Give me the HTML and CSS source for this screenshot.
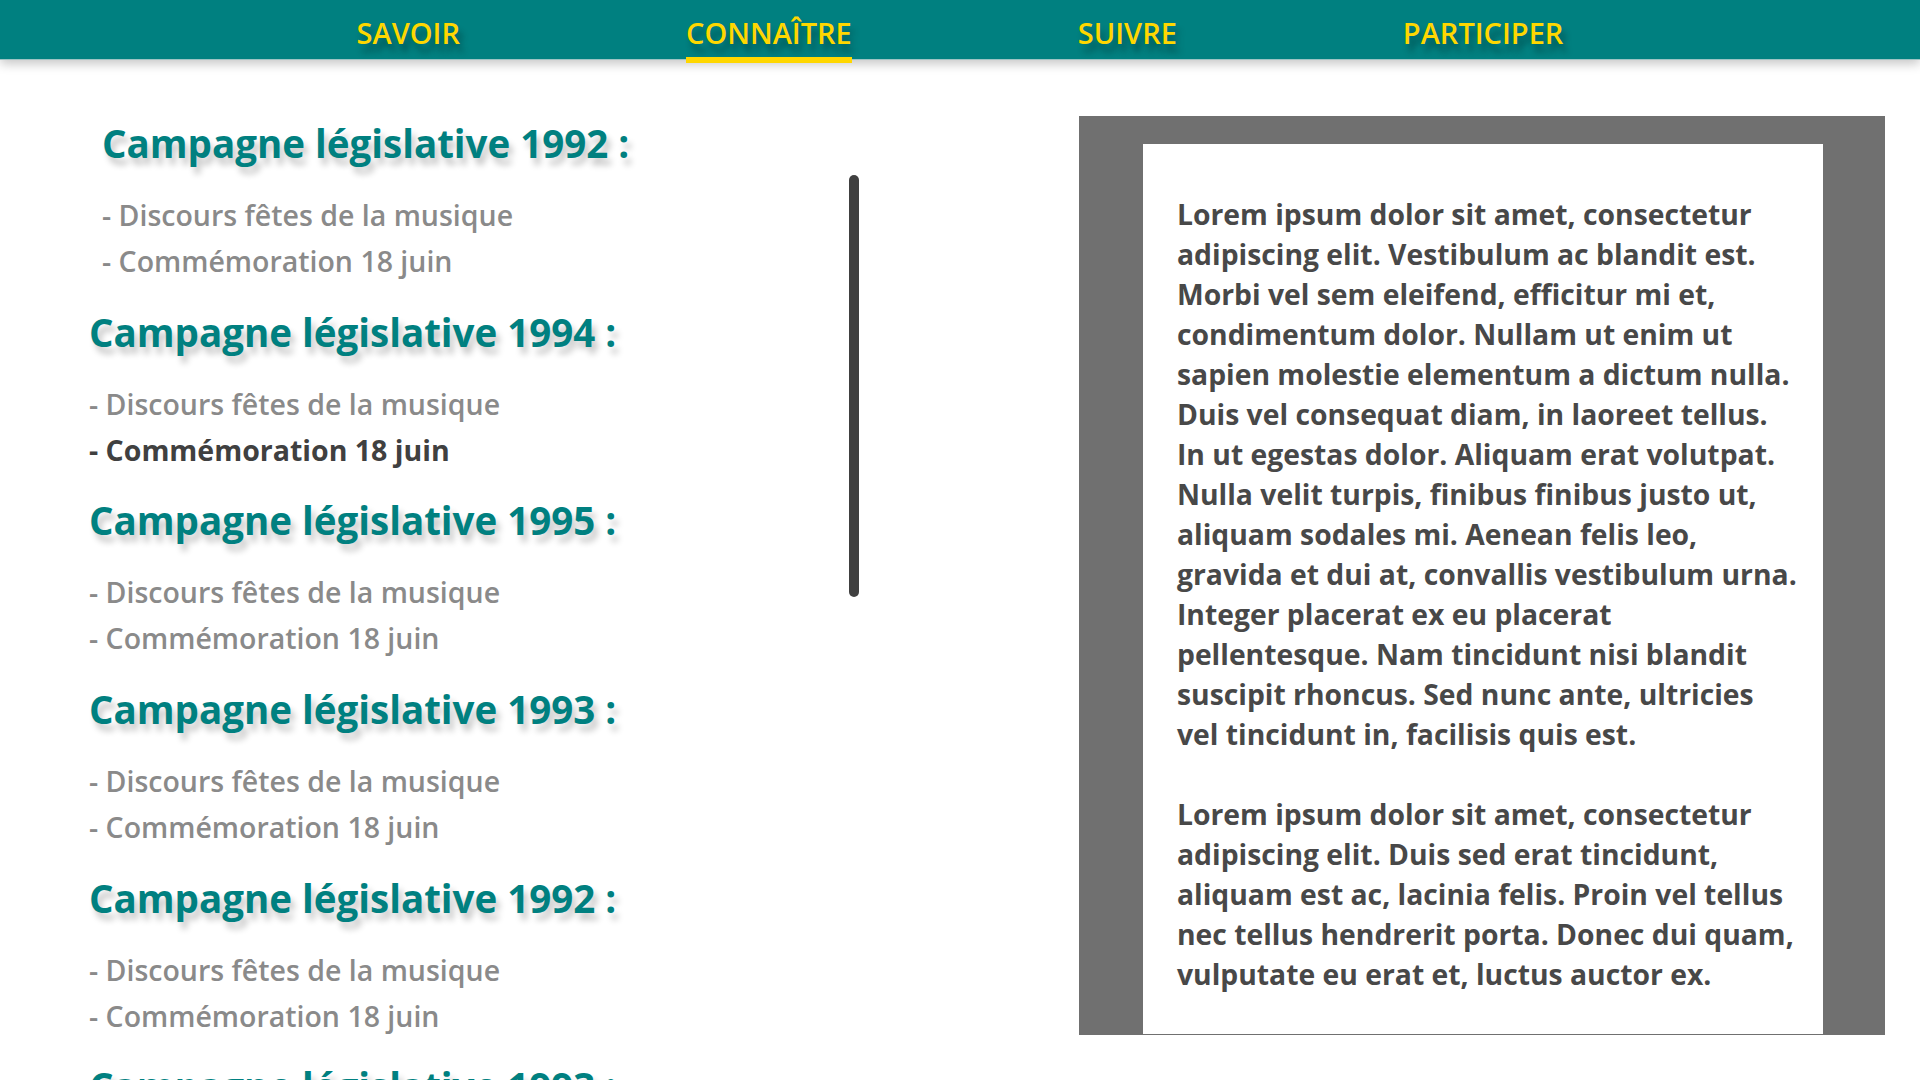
FILE: index.html
```html
<!DOCTYPE html>
<html lang="fr">
<head>
<meta charset="utf-8">
<title>Connaître</title>
<link rel="stylesheet" href="styles.css">
</head>
<body>
<header class="topbar">
  <nav class="nav">
    <a class="nav-link" href="#">SAVOIR</a>
    <a class="nav-link nav-link--active" href="#">CONNAÎTRE</a>
    <a class="nav-link" href="#">SUIVRE</a>
    <a class="nav-link" href="#">PARTICIPER</a>
  </nav>
</header>
<main class="layout">
  <section class="archive">
    <div class="archive-list">
      <div class="campaign campaign--offset">
        <h2 class="campaign-title">Campagne législative 1992 :</h2>
        <ul class="campaign-items">
          <li>- Discours fêtes de la musique</li>
          <li>- Commémoration 18 juin</li>
        </ul>
      </div>
      <div class="campaign">
        <h2 class="campaign-title">Campagne législative 1994 :</h2>
        <ul class="campaign-items">
          <li>- Discours fêtes de la musique</li>
          <li class="is-current">- Commémoration 18 juin</li>
        </ul>
      </div>
      <div class="campaign">
        <h2 class="campaign-title">Campagne législative 1995 :</h2>
        <ul class="campaign-items">
          <li>- Discours fêtes de la musique</li>
          <li>- Commémoration 18 juin</li>
        </ul>
      </div>
      <div class="campaign">
        <h2 class="campaign-title">Campagne législative 1993 :</h2>
        <ul class="campaign-items">
          <li>- Discours fêtes de la musique</li>
          <li>- Commémoration 18 juin</li>
        </ul>
      </div>
      <div class="campaign">
        <h2 class="campaign-title">Campagne législative 1992 :</h2>
        <ul class="campaign-items">
          <li>- Discours fêtes de la musique</li>
          <li>- Commémoration 18 juin</li>
        </ul>
      </div>
      <div class="campaign">
        <h2 class="campaign-title">Campagne législative 1993 :</h2>
        <ul class="campaign-items">
          <li>- Discours fêtes de la musique</li>
          <li>- Commémoration 18 juin</li>
        </ul>
      </div>
    </div>
    <div class="scroll-track"><div class="scroll-thumb"></div></div>
  </section>
  <aside class="reader">
    <div class="reader-page">
      <p>Lorem ipsum dolor sit amet, consectetur<br>adipiscing elit. Vestibulum ac blandit est.<br>Morbi vel sem eleifend, efficitur mi et,<br>condimentum dolor. Nullam ut enim ut<br>sapien molestie elementum a dictum nulla.<br>Duis vel consequat diam, in laoreet tellus.<br>In ut egestas dolor. Aliquam erat volutpat.<br>Nulla velit turpis, finibus finibus justo ut,<br>aliquam sodales mi. Aenean felis leo,<br>gravida et dui at, convallis vestibulum urna.<br>Integer placerat ex eu placerat<br>pellentesque. Nam tincidunt nisi blandit<br>suscipit rhoncus. Sed nunc ante, ultricies<br>vel tincidunt in, facilisis quis est.</p>
      <p>Lorem ipsum dolor sit amet, consectetur<br>adipiscing elit. Duis sed erat tincidunt,<br>aliquam est ac, lacinia felis. Proin vel tellus<br>nec tellus hendrerit porta. Donec dui quam,<br>vulputate eu erat et, luctus auctor ex.</p>
    </div>
  </aside>
</main>
</body>
</html>
```

FILE: styles.css
```css
* { box-sizing: border-box; }

html, body {
  margin: 0;
  padding: 0;
  height: 100%;
}

body {
  background: #ffffff;
  font-family: "Open Sans", "Noto Sans", sans-serif;
  overflow: hidden;
}

.topbar {
  height: 60px;
  background: #008080;
  border-bottom: 1px solid #9cc4c4;
  box-shadow: 0 4px 10px rgba(0, 0, 0, 0.22);
  position: relative;
  z-index: 2;
}

.nav {
  display: flex;
  justify-content: center;
  gap: 226px;
  height: 100%;
}

.nav-link {
  position: relative;
  display: block;
  height: 59px;
  padding-top: 13px;
  line-height: 40px;
  font-size: 29px;
  font-weight: 600;
  color: #ffd700;
  text-decoration: none;
  text-shadow: 4px 8px 6px rgba(0, 40, 40, 0.45);
}

.nav-link--active::after {
  content: "";
  position: absolute;
  left: 0;
  right: 0;
  top: 57px;
  height: 6px;
  background: #ffd700;
}

.layout {
  display: flex;
  align-items: flex-start;
  padding-left: 89px;
}

.archive {
  display: flex;
  align-items: flex-start;
  width: 990px;
  flex: none;
}

.archive-list {
  width: 760px;
  padding-top: 57px;
}

.campaign--offset {
  padding-left: 13px;
}

.campaign-title {
  margin: 0 0 23px;
  font-size: 38.5px;
  line-height: 52px;
  font-weight: 700;
  color: #008080;
  text-shadow: 4px 7px 6px rgba(0, 0, 0, 0.22);
  white-space: nowrap;
}

.campaign-items {
  list-style: none;
  margin: 0 0 21.7px;
  padding: 0;
}

.campaign-items li {
  font-size: 28.5px;
  line-height: 46px;
  font-weight: 600;
  color: #8a8a8a;
  white-space: nowrap;
}

.campaign-items li.is-current {
  font-weight: 700;
  color: #404040;
}

.scroll-track {
  width: 10px;
  flex: none;
}

.scroll-thumb {
  margin-top: 115px;
  width: 10px;
  height: 422px;
  border-radius: 5px;
  background: #404040;
}

.reader {
  flex: none;
  width: 806px;
  height: 919px;
  margin-top: 56px;
  padding: 28px 62px 1px 64px;
  background: #707070;
}

.reader-page {
  height: 100%;
  background: #ffffff;
  padding: 50px 10px 0 34px;
}

.reader-page p {
  margin: 0 0 40px;
  font-weight: 700;
  font-size: 28.3px;
  line-height: 40px;
  color: #484848;
  white-space: nowrap;
}
```
